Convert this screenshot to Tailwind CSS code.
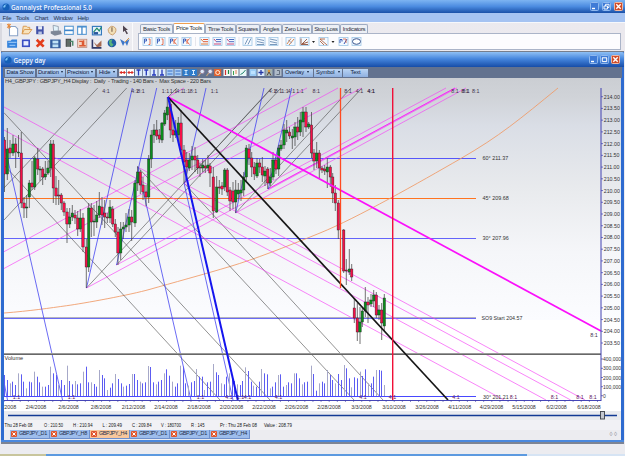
<!DOCTYPE html>
<html lang="en">
<head>
<meta charset="utf-8">
<title>Gannalyst Professional 5.0</title>
<script src="https://cdn.jsdelivr.net/npm/@tailwindcss/browser@4"></script>
</head>
<body class="w-[625px] h-[456px] overflow-hidden bg-[#ececf0] font-['Liberation_Sans',Arial,sans-serif] text-[6px] leading-none text-[#222]">
<div class="flex flex-col w-full h-full">

  <!-- application title bar -->
  <header class="h-[13px] shrink-0 flex items-center bg-linear-to-b from-[#7db4f2] via-[#4b8be0] via-50% to-[#1a50a8] pl-[2px] pr-[2px]">
    <svg class="w-[8px] h-[8px]" viewBox="0 0 8 8"><circle cx="4" cy="4" r="3.6" fill="#1560b8"/><path d="M1 4Q2 1 5 1.2Q3 2 3.4 4Q2 5 1 4Z" fill="#7cc4f6"/></svg>
    <h1><svg class="h-[11px] w-[100px] overflow-visible" viewBox="0 0 100 11"><text x="1" y="8.7" font-family="Open Sans" font-weight="600" font-size="7.6" textLength="81" lengthAdjust="spacingAndGlyphs" fill="#f2f7ff">Gannalyst Professional 5.0</text></svg></h1>
    <div class="ml-auto flex gap-[3px]">
      <svg class="w-[9px] h-[9px]" viewBox="0 0 9 9"><rect x=".5" y=".5" width="8" height="8" rx="1" fill="#3f7bd6" stroke="#8fb8ee"/><path d="M2 6.5H5" stroke="#fff" stroke-width="1.4"/></svg>
      <svg class="w-[9px] h-[9px]" viewBox="0 0 9 9"><rect x=".5" y=".5" width="8" height="8" rx="1" fill="#3f7bd6" stroke="#8fb8ee"/><path d="M3.5 4V2.3H7V5.5H5.6M2 4H5.5V7H2Z" stroke="#fff" fill="none" stroke-width=".9"/></svg>
      <svg class="w-[9px] h-[9px]" viewBox="0 0 9 9"><rect x=".5" y=".5" width="8" height="8" rx="1" fill="#cf4a28" stroke="#f0b8a0"/><path d="M2.3 2.3L6.7 6.7M6.7 2.3L2.3 6.7" stroke="#fff" stroke-width="1.4"/></svg>
    </div>
  </header>

  <!-- menu -->
  <nav class="h-[9px] shrink-0 flex items-center bg-[#a5c3f2] text-[#24334f] text-[6px] pl-[2.5px]">
    <span class="w-[13.5px] tracking-[-.2px]">File</span><span class="w-[18.5px] tracking-[-.2px]">Tools</span><span class="w-[19px] tracking-[-.2px]">Chart</span><span class="w-[24px] tracking-[-.4px]">Window</span><span class="tracking-[-.3px]">Help</span>
  </nav>

  <!-- tool area -->
  <section class="h-[29px] shrink-0 flex bg-linear-to-r from-[#ececf1] to-[#ebe9ee] border-t border-[#f6f8fc]">
    <div id="mainTools" class="grid grid-cols-[14px_13px_16px_14px_13px_13px_17px_13px_12px] auto-rows-[13px] w-[133px] pl-[4px] border-r border-r-[#fafafc] shrink-0 border-l-2 border-l-[#d9d9e0]">
      <svg viewBox="0 0 12 13"><path d="M3 3H8L10 5V11H3Z" fill="#fff" stroke="#8aa4c8" stroke-width=".9"/><path d="M1 1L4 4M4 1L1 4M2.5 .5V5" stroke="#e68a3c" stroke-width=".9"/></svg>
      <svg viewBox="0 0 12 13"><path d="M2 10L3 3H6L7 4H9V6M2 10L4 6H11L8 10Z" fill="#f8e3bd" stroke="#d99a50" stroke-width=".9"/></svg>
      <svg viewBox="0 0 15 13"><path d="M3 3H10V10.500H3Z" fill="#4252a8"/><path d="M4.800 3H8.500V6H4.800Z" fill="#e8edf8"/><path d="M5 8H8.300V10.500H5Z" fill="#b8c4e4"/></svg>
      <svg viewBox="0 0 12 13"><path d="M3.500 2L8 3V7H4Z" fill="#e3f3fb" stroke="#8a98a8" stroke-width=".7"/><path d="M1.500 7L10 6.500L11 9.500L5 11L1.500 9Z" fill="#7d8797"/></svg>
      <svg viewBox="0 0 12 13"><rect x="1.500" y="3" width="8" height="7.500" fill="#fff" stroke="#5698d2"/><path d="M1.500 6.800H9.500" stroke="#3e85ca" stroke-width="1.500"/></svg>
      <svg viewBox="0 0 12 13"><rect x="1.500" y="3" width="8" height="7.500" fill="#fff" stroke="#5698d2"/><path d="M5.500 3V10.500M1.500 3.500H9.500" stroke="#3e85ca" stroke-width="1.200"/></svg>
      <svg viewBox="0 0 15 13"><rect x="3" y="3" width="8" height="7.500" fill="#e4f2fb" stroke="#3479bd"/><path d="M4 8L7 4.500L9 7L11 3.500" stroke="#1d8a66" fill="none"/><path d="M4 9H8" stroke="#29579b" stroke-width="2"/></svg>
      <svg viewBox="0 0 12 13"><path d="M2 6Q5 .5 9 5Q10 9 6 11Q2 10 2 6Z" fill="#f2dfb6" stroke="#c59560" stroke-width=".8"/><path d="M5.500 4V8" stroke="#775c48"/></svg>
      <svg viewBox="0 0 12 13"><path d="M4 2.500L9 7H6.800L9 10.500L7.500 11.200L5.800 7.800L4 9Z" fill="#504550"/></svg>

      <svg viewBox="0 0 12 13"><path d="M1 4H4L5 3H9.500V10H1Z" fill="#3583dc"/><path d="M2 5.500H9M3 8H8" stroke="#90c1f4"/></svg>
      <svg viewBox="0 0 12 13"><rect x="2.500" y="4" width="6" height="5.500" fill="#e9efff" stroke="#3a4fc4" stroke-width="1.500"/></svg>
      <svg viewBox="0 0 15 13"><path d="M3.500 3.500L10 10M10 3.500L3.500 10" stroke="#e33d1c" stroke-width="2.500"/></svg>
      <svg viewBox="0 0 12 13"><rect x="1" y="3" width="9" height="7.500" fill="#335f9e"/><rect x="3" y="4" width="5" height="2.400" fill="#bfe3f6"/><rect x="3" y="7.200" width="5" height="2.400" fill="#bfe3f6"/></svg>
      <svg viewBox="0 0 12 13"><path d="M3 10V3H7V10" fill="#616c67" stroke="#424747"/><path d="M6 5H9V9" stroke="#49886b" fill="none" stroke-width="1.300"/></svg>
      <svg viewBox="0 0 12 13"><rect x="1.500" y="3" width="8.500" height="7.500" fill="#f3d2c0" stroke="#ba8a7c" stroke-width=".7"/><path d="M3 5H6V9H3M7 4V9H9" stroke="#dc5a33" fill="none" stroke-width="1.300"/></svg>
      <svg viewBox="0 0 15 13"><path d="M3 3V10.500H11" stroke="#303968" fill="none" stroke-width="1.400"/><path d="M4 5L7 8L11 4V9L7 10Z" fill="#a66a50"/></svg>
      <svg viewBox="0 0 12 13"><circle cx="5.500" cy="6.500" r="4" fill="#225ea6"/><path d="M3 4L6 3L5 6L7 8L5 10Q2 8 3 4Z" fill="#57b27b"/></svg>
      <svg viewBox="0 0 12 13"><path d="M1 3L4 10L6 6L8 10L10.500 3L6 6Z" fill="#3d76c8"/><path d="M6 6L10 2" stroke="#d39649"/></svg>
    </div>
    <div class="flex flex-col w-[487px] ml-[1px]">
      <div class="flex items-end h-[10px] pl-[6px] text-[6px] text-[#2b3140]">
        <div class="w-[33px] h-[9px] border border-b-0 border-[#9eabc2] rounded-t-[2px] bg-[#eceff5] pt-[1px] text-center whitespace-nowrap tracking-[-.3px]">Basic Tools</div>
        <div class="w-[32px] h-[10px] border border-b-0 border-[#9eabc2] border-t-[#f0a050] rounded-t-[2px] bg-white pt-[1px] text-center whitespace-nowrap tracking-[-.3px]">Price Tools</div>
        <div class="w-[31px] h-[9px] border border-b-0 border-[#9eabc2] rounded-t-[2px] bg-[#eceff5] pt-[1px] text-center whitespace-nowrap tracking-[-.35px]">Time Tools</div>
        <div class="w-[24px] h-[9px] border border-b-0 border-[#9eabc2] rounded-t-[2px] bg-[#eceff5] pt-[1px] text-center whitespace-nowrap tracking-[-.35px]">Squares</div>
        <div class="w-[22px] h-[9px] border border-b-0 border-[#9eabc2] rounded-t-[2px] bg-[#eceff5] pt-[1px] text-center whitespace-nowrap tracking-[-.35px]">Angles</div>
        <div class="w-[30px] h-[9px] border border-b-0 border-[#9eabc2] rounded-t-[2px] bg-[#eceff5] pt-[1px] text-center whitespace-nowrap tracking-[-.35px]">Zero Lines</div>
        <div class="w-[28px] h-[9px] border border-b-0 border-[#9eabc2] rounded-t-[2px] bg-[#eceff5] pt-[1px] text-center whitespace-nowrap tracking-[-.35px]">Stop Loss</div>
        <div class="w-[28px] h-[9px] border border-b-0 border-[#9eabc2] rounded-t-[2px] bg-[#eceff5] pt-[1px] text-center whitespace-nowrap tracking-[-.35px]">Indicators</div>
      </div>
      <div class="h-[17px] ml-[4px] border border-[#aab4c8] bg-[#fcfcfe]">
        <svg id="priceIcons" class="w-[240px] h-[15px]" viewBox="139 34 240 15"></svg>
      </div>
    </div>
  </section>

  <!-- chart window -->
  <main class="h-[393px] shrink-0 flex flex-col mx-[1px] border-t border-[#777e8c] bg-[#2e6bd0]">
    <div class="h-[15px] shrink-0 flex items-center bg-linear-to-b from-[#8fc0f4] via-[#4787de] via-45% to-[#174da8] pl-[3px] pr-[4px] rounded-t-[2px]">
      <svg class="w-[8px] h-[8px]" viewBox="0 0 8 8"><circle cx="4" cy="4" r="3.600" fill="#1560b8"/><path d="M1 4Q2 1 5 1.200Q3 2 3.400 4Q2 5 1 4Z" fill="#7cc4f6"/></svg>
      <h2><svg class="h-[12px] w-[40px] overflow-visible" viewBox="0 0 40 12"><text x="1.500" y="9" font-family="Open Sans" font-weight="600" font-size="7.600" textLength="32" lengthAdjust="spacingAndGlyphs" fill="#f2f7ff">Geppy day</text></svg></h2>
      <div class="ml-auto flex gap-[2px]">
        <svg class="w-[9px] h-[9px]" viewBox="0 0 9 9"><rect x=".5" y=".5" width="8" height="8" rx="1" fill="#3f7bd6" stroke="#8fb8ee"/><path d="M2 6.500H5" stroke="#fff" stroke-width="1.400"/></svg>
        <svg class="w-[9px] h-[9px]" viewBox="0 0 9 9"><rect x=".5" y=".5" width="8" height="8" rx="1" fill="#3f7bd6" stroke="#8fb8ee"/><path d="M2 2.800H7M2.300 3V6.600H6.700V3" stroke="#fff" fill="none"/></svg>
        <svg class="w-[9px] h-[9px]" viewBox="0 0 9 9"><rect x=".5" y=".5" width="8" height="8" rx="1" fill="#cf4a28" stroke="#f0b8a0"/><path d="M2.300 2.300L6.700 6.700M6.700 2.300L2.300 6.700" stroke="#fff" stroke-width="1.400"/></svg>
      </div>
    </div>
    <div class="h-[11px] shrink-0 mx-[2px] flex items-center bg-[#63728f] pl-[2px] text-[5.800px] text-[#10203c] tracking-[-.15px]">
      <span class="w-[30px] h-[8px] pt-[1px] bg-linear-to-b from-[#b9d4f4] to-[#8fb0e0] text-center whitespace-nowrap mr-[2px]">Data Show</span>
      <span class="w-[28px] h-[8px] pt-[1px] bg-linear-to-b from-[#b9d4f4] to-[#8fb0e0] mr-[1px] pl-[1px] whitespace-nowrap">Duration<i class="inline-block ml-[2px] mb-[1px] border-x-[1.500px] border-x-transparent border-t-2 border-t-[#10203c]"></i></span>
      <span class="w-[29px] h-[8px] pt-[1px] bg-linear-to-b from-[#b9d4f4] to-[#8fb0e0] mr-[2px] pl-px whitespace-nowrap tracking-[-.2px]">Precision<i class="inline-block ml-[2px] mb-[1px] border-x-[1.500px] border-x-transparent border-t-2 border-t-[#10203c]"></i></span>
      <span class="w-[20px] h-[8px] pt-[1px] bg-linear-to-b from-[#b9d4f4] to-[#8fb0e0] mr-[1px] pl-[2px] whitespace-nowrap">Hide<i class="inline-block ml-[3px] mb-[1px] border-x-[1.500px] border-x-transparent border-t-2 border-t-[#10203c]"></i></span>
      <svg id="chartIcons" class="w-[165px] h-[9px] shrink-0" viewBox="118 67 165 9"></svg>
      <span class="w-[30px] h-[8px] pt-[1px] bg-linear-to-b from-[#b9d4f4] to-[#8fb0e0] mr-[1px] pl-[2px] whitespace-nowrap">Overlay<i class="inline-block ml-[3px] mb-[1px] border-x-[1.500px] border-x-transparent border-t-2 border-t-[#10203c]"></i></span>
      <span class="w-[28px] h-[8px] pt-[1px] bg-linear-to-b from-[#b9d4f4] to-[#8fb0e0] mr-[1px] pl-[2px] whitespace-nowrap">Symbol<i class="inline-block ml-[4px] mb-[1px] border-x-[1.500px] border-x-transparent border-t-2 border-t-[#10203c]"></i></span>
      <span class="w-[25px] h-[8px] pt-[1px] bg-linear-to-b from-[#b9d4f4] to-[#8fb0e0] text-center">Text</span>
    </div>
    <svg id="chart" class="w-[617px] h-[342px] ml-[3px] shrink-0" viewBox="4 78 617 342" font-family="Liberation Sans, Arial, sans-serif"></svg>
    <div class="h-[10px] shrink-0 ml-[3px] w-[617px] bg-[#f1f1f5]">
      <svg class="w-[617px] h-[10px]" viewBox="4 420 617 10" font-family="Liberation Sans, Arial, sans-serif" font-size="4.900" fill="#111">
        <text x="4.500" y="427" textLength="28" lengthAdjust="spacingAndGlyphs">Thu 28 Feb 08</text><text x="44" y="427" textLength="19" lengthAdjust="spacingAndGlyphs">O : 210.50</text><text x="73" y="427" textLength="19.500" lengthAdjust="spacingAndGlyphs">H : 210.94</text><text x="102.500" y="427" textLength="19.500" lengthAdjust="spacingAndGlyphs">L : 209.49</text><text x="132" y="427" textLength="19.500" lengthAdjust="spacingAndGlyphs">C : 209.84</text><text x="161" y="427" textLength="20" lengthAdjust="spacingAndGlyphs">V : 180700</text><text x="191" y="427" textLength="13.500" lengthAdjust="spacingAndGlyphs">R : 145</text><text x="220" y="427" textLength="37" lengthAdjust="spacingAndGlyphs">Pr : Thu 28 Feb 08</text><text x="264" y="427" textLength="28" lengthAdjust="spacingAndGlyphs">Value : 208.79</text>
      </svg>
    </div>
    <div id="tabs" class="h-[10px] shrink-0 ml-[3px] w-[617px] bg-[#ececf0] pl-[6px] flex"></div>
    <div class="h-[2px] bg-[#4a88de] shrink-0"></div>
    <div class="h-[2px] bg-[#7d8494] shrink-0"></div>
  </main>
  <footer class="mt-auto h-[2px] flex shrink-0"><i class="w-[46px] bg-[#c8c59c]"></i><i class="w-[481px] bg-[#5c9ae0]"></i><i class="flex-1 bg-[#d6e4f4]"></i></footer>
</div>

<script>
// ---------- Price tool icons ----------
(function(){
  let s='';
  const box=x=>`<rect x="${x-4}" y="37.500" width="9" height="8" fill="#f4f9ff" stroke="#9fc6e6" stroke-width=".8"/>`;
  [147,160,173,186].forEach((x,i)=>{s+=box(x)+`<path d="M${x-2.500} 43.500V39H${x-.5}V41H${x-2}" stroke="#3358b8" fill="none" stroke-width=".9"/><path d="${i<2?`M${x+1.500} 39H${x+3}V44.500H${x+1.500}`:`M${x+3.500} 38.500L${x+1} 41.500L${x+3.500} 44.500M${x+1} 39V44`}" stroke="#e2603c" fill="none" stroke-width=".9"/>`;});
  [204,217,230].forEach((x,i)=>{s+=box(x)+`<path d="M${x-1} 39.500H${x+4}M${x-1} 41.700H${x+4}" stroke="${i?'#4a6cc0':'#e05a38'}" stroke-width="1"/><path d="M${x-3} 44H${x+4}M${x-3} 39L${x-1} 41.500" stroke="${i?'#c8487a':'#e07838'}" stroke-width="1"/>`;});
  [247,260,273].forEach((x,i)=>{s+=box(x)+`<path d="${i?`M${x-3} 39L${x+4} 40.500M${x-3} 41.500L${x+4} 43M${x-3} 44.500H${x+4}`:`M${x-2} 44.500L${x+1} 38.500M${x+1} 44.500L${x+4} 38.500`}" stroke="#5b7fa8" fill="none" stroke-width=".8"/>`;});
  s+=box(290)+'<path d="M287 44L291 38.500M289 45L294 39" stroke="#d0763c" stroke-width=".9"/><path d="M288 40L292 43" stroke="#6a86b0" stroke-width=".6"/>';
  s+=box(304)+'<path d="M301 38.500V44.500H308M302 44L307 39M302 44L308 42" stroke="#94523c" fill="none" stroke-width=".9"/>';
  s+='<path d="M312 41H315L313.500 43ZM331.500 41H334.500L333 43Z" fill="#222"/>';
  s+=box(323)+'<path d="M320 39H325M320 39L327 45M320 41L324 45" stroke="#b26240" fill="none" stroke-width=".9"/>';
  s+=box(343)+'<path d="M340 43V39.500H342V41.500M344 44L347 39" stroke="#3358b8" fill="none" stroke-width="1"/><path d="M343 39H346V43" stroke="#de6040" fill="none" stroke-width=".8"/>';
  s+=box(356)+'<ellipse cx="356.500" cy="41.500" rx="4" ry="2.800" fill="#fff" stroke="#38548c" stroke-width="1"/>';
  s+='<path d="M195.500 37V46M239 37V46M282 37V46" stroke="#dcdde4" stroke-width=".7"/>';
  document.getElementById('priceIcons').innerHTML=s;
})();

// ---------- Chart toolbar icons ----------
(function(){
  const xs=[122.7,130.5,138.500,146.300,154,162,170,178,186,193.500,201.500,209.500,217.700,227,235,243,253,261,269,278];
  const bg=['#fff','#fff','#dcebfb','#dcebfb','#dcebfb','#dcebfb','#a9cdf5','#a9cdf5','#2d7ccc','#2d7ccc','#63728f','#63728f','#e8622c','#f6faf6','#f6faf6','#e8f7f7','#9ccdf6','#dcebfb','#a2b2b2','#aebac8'];
  const red=x=>`<path d="M${x-3} 71.500H${x+3}M${x-1.500} 70V73M${x+1.500} 70V73" stroke="#dd2c24" stroke-width="1.100"/>`;
  const top=x=>`<path d="M${x-2} 69H${x+2}M${x} 69V74.500" stroke="#2438bb" stroke-width="1.300"/>`;
  const bot=x=>`<path d="M${x-2} 74H${x+2}M${x} 68.500V74" stroke="#2438bb" stroke-width="1.300"/>`;
  const bars=x=>`<path d="M${x-2.500} 70H${x+2.500}M${x-2.500} 73H${x+2.500}" stroke="#376fc8"/>`;
  const beam=x=>`<path d="M${x-1.500} 69.500H${x+1.500}M${x} 69.500V73.500M${x-1.500} 73.500H${x+1.500}" stroke="#d8ecff"/>`;
  const lens=x=>`<circle cx="${x+.7}" cy="70.500" r="2.200" fill="#dce9f8" stroke="#8b7190" stroke-width=".8"/><path d="M${x-.8} 72L${x-3} 75" stroke="#c9a47a" stroke-width="1.200"/>`;
  const g=[red,red,top,top,bot,bot,bars,bars,beam,beam,lens,lens,
    x=>`<circle cx="${x}" cy="71.500" r="2" fill="none" stroke="#fff0dd"/>`,
    x=>`<path d="M${x-1.500} 69V74" stroke="#d03030" stroke-width="1.200"/><path d="M${x+1.500} 69V73" stroke="#1d8840" stroke-width="1.200"/>`,
    x=>`<path d="M${x-1.500} 70V74" stroke="#38a050"/><path d="M${x+1} 69V73" stroke="#de7e58"/>`,
    x=>`<path d="M${x-2.500} 73.500L${x} 72L${x+2.500} 69" stroke="#22866e" fill="none"/>`,
    x=>`<rect x="${x-2}" y="70" width="4" height="3" fill="#bde2ff"/>`,
    x=>`<path d="M${x-2.500} 71.500H${x+2.500}M${x} 69V74" stroke="#2438a4" stroke-width="1.300"/>`,
    x=>`<circle cx="${x}" cy="70" r="1.300" fill="#d9963e"/><path d="M${x} 71L${x-2} 74.500M${x} 71L${x+2} 74.500" stroke="#5c4535"/>`,
    x=>`<path d="M${x-1} 69.500H${x+1.500}V73.500H${x-1.500}" stroke="#647080" fill="none"/>`];
  document.getElementById('chartIcons').innerHTML=xs.map((x,i)=>`<rect x="${x-3.500}" y="68" width="7" height="7" fill="${bg[i]}"/>`+g[i](x)).join('');
})();

// ---------- Chart ----------
(function(){
  let s=`<defs><linearGradient id="sky" x1="0" y1="0" x2="0" y2="1"><stop offset="0" stop-color="#cbced3"/><stop offset=".08" stop-color="#d0d3d8"/><stop offset=".2" stop-color="#dadee6"/><stop offset=".45" stop-color="#e8eaed"/><stop offset=".72" stop-color="#f5f6f9"/><stop offset="1" stop-color="#fbfcff"/></linearGradient></defs>
  <rect x="4" y="78" width="617" height="342" fill="#fff"/><rect x="4" y="78" width="617" height="242" fill="url(#sky)"/>`;
  const L=(a,b,c,d,col,w=.7,o=1)=>{s+=`<path d="M${a} ${b}L${c} ${d}" stroke="${col}" stroke-width="${w}" stroke-opacity="${o}" fill="none"/>`};
  const H=(x,y,w,col)=>{s+=`<rect x="${x}" y="${y}" width="${w}" height="1" fill="${col}"/>`};
  const B='#3d3df0',K='#4b4b4b',M='#f63df6';
  H(4,158,472,'#5656fa');H(4,238,472,'#6464fa');H(4,317,472,'#b4b4c0');H(4,318,472,'#6a6af4');
  H(4,198,472,'#ff7420');
  s+='<path d="M4 313C30 311 50 308 66.700 305.700S130 295 150 289.300S205 274 230 266.500S283 248 320 233S420 182 460 159S520 119 558 88" stroke="#f09a66" stroke-width=".85" fill="none"/>';
  // angle fans
  [[4,188,97.7,88],[4,220,126.7,88],[86.5,288,272,88],[116.5,265,281,88],[184,183,271.5,88],[235.7,213,351,88],[268,189,362,88],[168,97,177,88],
   [4,112.7,270,400],[4,165,220,400],[137.7,167,354,400],[184,183,383,400]].forEach(l=>L(...l,K,.75,.8));
  [[4,107,546,400],[4,130,504,400],[184,183.5,585,400],[137.7,167,570.7,400],[4,251.7,307,88],[4,268.500,338,88],[86.5,288,457,88],[116.5,265,446,88],[184,183,361.500,88],[235.7,213,466,88],[268,189,455,88],[168,97,184,88]].forEach(l=>L(...l,M,.75,.85));
  L(268,189,455,88,'#fb10fb',1,.7);
  [[4,143,62.500,400],[137.7,167,191,400],[184,183,233,400],[4,382,7.5,400],[86.5,288,132.300,88],[116.5,265,156.700,88],[184.700,183,206,88],[235.700,213,264,88],[268.300,189,291.700,88]].forEach(l=>L(...l,B,.85,.9));
  // candles: x, high, body top, body bottom, low, rising
  const C=[[4.5,137,140,174,192,0],[7.3,128,149,174,180,1],[10,140,148,153,158,0],[13,135,144,153,156,1],[15.7,138,144,152,168,0],[18.5,135,152,153,157,1],[21.3,132,153,203,208,0],[24,197,203,208,218,0],[26.7,195,207,208,218,1],[29.3,180,183,197,208,1],[32,161,183,187,190,0],[34.7,156,158,187,190,1],[37.7,148,159,169,175,0],[40,166,169,170,181,1],[42.7,167,169,177,185,0],[45.3,161,174,177,180,1],[48,161,168,173,175,1],[50.7,140,144,168,177,1],[53.3,140,144,188,203,0],[56,176,188,196,205,0],[58.7,180,195,196,205,0],[61.3,193,195,203,210,0],[64,201,203,212,216,0],[67,208,212,224,243,0],[69.7,208,217,224,228,1],[72.3,205,213,217,221,1],[75,210,215,218,224,0],[77.7,211,218,229,236,0],[80.3,209,218,229,232,1],[83,213,218,247,252,0],[86.3,239,247,267,288,0],[88.7,203,208,267,272,1],[91.3,203,208,222,237,0],[94,205,221,222,236,1],[96.7,201,215,222,228,1],[99.3,192,206,215,218,1],[102,197,207,215,225,0],[104.7,200,213,217,228,0],[107.3,213,217,218,223,0],[110,200,207,218,223,1],[112.7,206,209,224,227,0],[115.3,219,224,232,237,0],[118,227,232,253,265,0],[120.7,222,229,253,260,1],[123.3,222,227,229,239,1],[126,213,225,227,232,1],[129,209,217,225,232,1],[131.7,210,217,222,241,0],[135,180,183,223,227,1],[137.7,166,172,183,191,1],[140.3,170,172,185,194,0],[143,177,185,192,200,0],[146,185,192,197,206,0],[148.7,155,159,197,203,1],[151.3,130,135,159,168,1],[154,124,130,135,143,1],[156.7,120,130,136,140,0],[159.3,129,135,139,143,0],[162,122,123,140,143,1],[164.7,110,113,124,126,1],[167.3,97,107,115,120,1],[170.3,100,104,130,138,0],[173,120,130,135,142,0],[175.7,120,131,135,138,1],[178.3,117,123,135,140,1],[181,110,123,150,155,0],[184,145,150,162,183,0],[186.7,152,160,167,180,0],[189.3,153,160,168,171,1],[192,146,156,160,170,1],[195,147,156,160,172,0],[197.7,155,160,168,174,0],[200,163,167,168,177,0],[202.7,159,165,168,172,1],[205.3,160,166,168,173,0],[208,155,165,168,171,1],[210,163,166,173,187,0],[213.3,167,177,211,218,0],[216.7,176,187,212,213,1],[219.3,180,187,188,194,0],[222,182,186,189,195,0],[224.7,168,170,187,191,1],[227.3,168,170,192,196,0],[230,187,190,201,211,0],[233,182,191,202,209,0],[235.7,180,190,202,213,1],[238.3,183,190,194,199,1],[241,180,190,193,201,1],[243.7,172,177,190,196,1],[246.3,145,148,177,181,1],[249,144,149,158,165,0],[251.7,152,158,167,177,0],[254.3,162,167,174,180,0],[257,158,163,176,178,1],[259.7,159,163,167,173,0],[262.3,157,167,175,182,0],[265,166,171,176,186,1],[267.7,167,169,183,189,0],[270.3,168,177,183,186,1],[273,152,160,177,180,1],[276,157,160,169,174,0],[278.7,145,148,169,176,1],[281,140,145,149,151,1],[284,124,130,145,149,1],[286.7,120,130,133,142,1],[289.5,127,132,136,139,0],[292.3,129,136,138,149,1],[295,122,127,137,146,1],[297.7,117,127,132,140,0],[300.3,112,120,132,136,1],[303,107,112,122,137,1],[306,107,112,127,132,0],[308.700,122,124,127,129,1],[311.5,112,125,153,158,0],[314,149,153,161,170,0],[316.7,142,153,161,168,1],[319.3,150,153,168,178,0],[322,166,168,170,173,0],[324.700,165,169,171,175,0],[327.3,158,167,172,188,1],[330.3,165,167,177,187,0],[332.7,173,177,193,203,0],[335.3,185,193,203,211,0],[338.3,200,203,230,239,0],[343.7,229,230,271,273,0],[346.3,259,270,271,285,0],[349.3,249,269,272,275,1],[351.7,264,269,277,281,0],[354.3,298,308,318,323,0],[357.3,303,318,332,341,0],[360,307,322,332,344,1],[362.3,307,311,322,327,1],[365.3,287,302,311,317,1],[368,297,302,305,323,0],[371,294,300,304,307,1],[373.7,290,295,301,307,1],[376.3,292,295,315,318,0],[379,305,310,315,320,1],[381.7,303,310,323,340,0],[384.3,294,298,326,331,1]];
  C.forEach(([x,h,t,b,l,g])=>{
    s+=`<path d="M${x} ${h}V${l}" stroke="#444" stroke-width=".75"/><rect x="${x-1.2}" y="${t}" width="2.400" height="${Math.max(.8,b-t)}" fill="${g?'#0a8c1c':'#f41048'}" stroke="#222" stroke-width=".4"/>`;});
  // volume
  const v=[[12,90],[22,105],[30,115],[38,110],[47,120],[55,85],[63,88],[71,110],[79,130],[87,110],[95,112],[103,80],[111,95],[119,112],[127,125],[136,125],[144,120],[152,65],[160,85],[168,90],[176,120],[184,105],[193,120],[201,62],[209,108],[217,118],[225,108],[233,118],[241,115],[249,80],[258,65],[266,112],[274,112],[282,117],[290,125],[298,75],[306,90],[314,100],[322,135],[330,128],[338,115],[347,87],[355,102],[363,115],[371,125],[379,122],[388,117],[396,87],[404,87],[412,105],[420,110],[428,115],[436,112],[444,63],[452,66],[460,112],[468,118],[476,110],[484,105],[492,85],[500,73],[508,92],[517,110],[525,125],[533,115],[541,62],[549,65],[557,115],[565,122],[573,112],[582,108],[590,72],[598,95],[606,95],[614,135],[622,112],[630,110],[640,57],[648,82],[656,90],[664,115],[672,118],[680,95],[688,85],[696,100],[704,108],[712,118],[720,120],[728,108],[737,67],[745,78],[753,110],[761,122],[769,125],[777,110],[785,72],[793,85],[801,88],[810,130],[818,125],[826,112],[834,90],[842,88],[850,125],[858,120],[866,112],[874,115],[882,85],[890,85],[898,100],[906,118],[914,112],[922,110]].map(([x,y])=>[x/3,345+y/3])
   .concat([[5,197],[10,222],[20,272],[28,250],[36,245],[44,250],[52,210],[60,225],[68,240],[77,250],[85,222],[94,240],[102,195],[109,205],[118,235],[125,262],[133,232],[142,235],[150,215],[158,228],[166,208],[175,250],[183,250],[190,230],[199,210],[207,210],[215,212],[223,255]].map(([x,y])=>[310+x/3,300+y/3]));
  v.forEach(([x,y],i)=>{x=Math.floor(x)+.5;L(x,y,x,396,i%3==2?'#a6a8c8':'#5c5cf2',1)});
  H(4,396,472,'#4848ff');
  H(4,353,597,'#9a9a9a');H(4,354,597,'#686868');
  // bold angles
  L(168,97,601,331,'#fb10fb',1.7);L(168,97,448,400,'#161616',1.7);L(168,97,237.8,400,'#1414ee',2);
  L(340.5,88,340.5,288,'#ff4a20',1.3);L(392.7,88,392.7,400,'#f01038',1.4);
  // axes
  H(4,400,597,'#4646b8');L(601,88,601,401,'#4040b0',1);
  const T=(x,y,t,a='start',f='#333',z=5.6)=>{s+=`<text x="${x}" y="${y}" font-size="${z}" text-anchor="${a}" fill="${f}">${t}</text>`};
  for(let i=0;i<22;i++){const y=96.7+i*11.73;L(601,y,603,y,'#4040b0',.7);T(603.700,y+2,(214-i*.5).toFixed(2),'start','#333',5.3);}
  [['400,000',359],['300,000',368.3],['200,000',377.5],['100,000',386.7],['0',395.7]].forEach(([t,y])=>{L(601,y,603,y,'#4040b0',.7);T(603,y+2,t,'start','#333',5)});
  for(let x=4;x<601;x+=8.13)L(x,400,x,402,'#4040a8',.6);
  T(9.5,409,'/2008','middle','#333',5.3);
  [['2/4',36],['2/6',68.5],['2/8',101],['2/12',133.5],['2/14',166],['2/18',199],['2/20',231.5],['2/22',264],['2/26',296.5],['2/28',329],['3/3',361.5],['3/10',394],['3/26',427],['4/11',459.5],['4/29',491.5],['5/15',524],['6/2',556.5],['6/18',589]].forEach(([t,x])=>T(x,409,t+'/2008','middle','#333',5.3));
  [['60° 211.37',160.2],['45° 209.68',200.2],['30° 207.96',240.2]].forEach(([t,y])=>T(482.500,y,t,'start','#333',5.4));
  T(481.500,320,'SO9 Start 204.57','start','#333',5.3);T(483,398.7,'30° 201.21','start','#333',5.3);
  [[106,'4:1'],[135,'4:1'],[141,'8:1'],[165.5,'1:1'],[173.500,'1:1'],[180,'4:1'],[186.500,'1:1'],[193.5,'8:1'],[214.5,'1:1'],[272.5,'4:1'],[278.500,'8:1'],[285,'1:1'],[291.500,'4:1'],[300,'1:1'],[316.3,'8:1'],[348,'8:1'],[359.5,'4:1'],[371,'4:1'],[371.3,'4:1'],[455,'8:1'],[465,'8:1'],[466,'8:1'],[475.7,'8:1']].forEach(([x,t])=>T(x,92.700,t,'middle','#40304a',5.3));
  T(594,336.5,'8:1','middle','#40304a',5.4);
  [[16.5,'1:1'],[71.5,'1:1'],[200.5,'1:1'],[229,'4:1'],[240.500,'1:1'],[247.500,'4:1'],[278.5,'4:1'],[363,'4:1'],[392.5,'4:1'],[456,'4:1'],[513.500,'8:1'],[554.5,'8:1'],[580,'8:1'],[593,'8:1']].forEach(([x,t])=>T(x,398.7,t,'middle','#602060',5.3));
  T(4.5,360,'Volume','start','#333',5.6);
  s+='<text x="5" y="83.200" font-size="5.700" fill="#333" textLength="206" lengthAdjust="spacing" xml:space="preserve">H4_GBPJPY : GBPJPY_H4 Display :  Daily  - Trading - 140 Bars -  Max Space - 220 Bars</text>';
  // scroll slider
  s+='<rect x="4" y="411" width="617" height="9" fill="#e9ebef"/><path d="M8 415.500H617" stroke="#123a94" stroke-width="1.500"/><rect x="600.500" y="411.500" width="4" height="7.500" fill="#c4c8d0" stroke="#3c4048" stroke-width=".9"/>';
  document.getElementById('chart').innerHTML=s;
})();

// ---------- Symbol tabs ----------
document.getElementById('tabs').innerHTML=['D1','H8','H4','D1','D1','H4'].map((t,i)=>`<span class="${i==2?'bg-[#f8c79c]':'bg-[#9dbdec]'} w-[40px] h-[9px] border-r border-b border-[#6f90cc] flex items-center pl-[1px] whitespace-nowrap text-[5.500px] tracking-[-.45px] text-[#24304a]"><svg class="w-[6px] h-[6px] mr-[2px] shrink-0" viewBox="0 0 6 6"><rect width="6" height="6" rx="1" fill="#e0562e"/><path d="M1.500 1.500L4.500 4.500M4.500 1.500L1.500 4.500" stroke="#fff"/></svg>GBPJPY_${t}</span>`).join('')+'<span class="ml-auto mr-[4px] text-[#8c8c98] pt-[1px]">◊ ◊</span>';
</script>
</body>
</html>
